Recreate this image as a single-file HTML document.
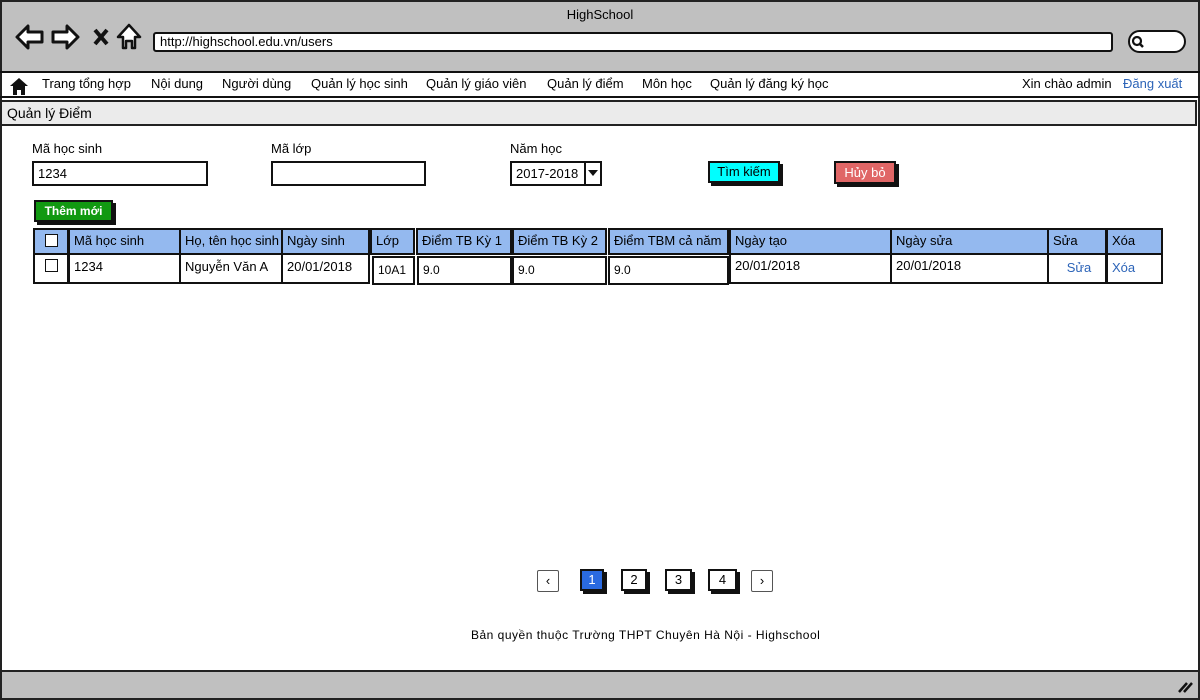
<!DOCTYPE html>
<html><head><meta charset="utf-8"><style>
*{margin:0;padding:0;box-sizing:border-box}
body{width:1200px;height:700px;position:relative;background:#fff;font-family:"Liberation Sans","DejaVu Sans",sans-serif;font-size:13px;color:#000;overflow:hidden}
.a{position:absolute}
.box{position:absolute;border:2px solid #111;background:#fff}
.t{position:absolute;white-space:nowrap}
.cell{position:absolute;border:2px solid #111;padding-left:4px;line-height:22px;white-space:nowrap;font-size:13px}
.h{background:#94b9ef}
.btn{position:absolute;border:2px solid #111;box-shadow:3px 3px 0 #111;text-align:center;font-size:13px}
</style></head><body>
<div class="a" style="left:0;top:0;width:1200px;height:700px;border:2px solid #222"></div>
<div class="a" style="left:2px;top:2px;width:1196px;height:70px;background:#c0c0c0"></div>
<div class="t" style="left:0;width:1200px;text-align:center;top:7px;font-size:13px">HighSchool</div>
<svg class="a" style="left:14px;top:22px" width="135" height="30" viewBox="0 0 135 30">
<path d="M3 15 L14 4 L14 10 L28 10 L28 20 L14 20 L14 26 Z" fill="#fff" stroke="#111" stroke-width="3" stroke-linejoin="round"/>
<path d="M64 15 L53 4 L53 10 L39 10 L39 20 L53 20 L53 26 Z" fill="#fff" stroke="#111" stroke-width="3" stroke-linejoin="round"/>
<path d="M81 8 L93 22 M93 8 L81 22" stroke="#111" stroke-width="4"/>
<path d="M104 15 L115 3 L126 15 L121 15 L121 26 L118 26 L118 19 L112 19 L112 26 L109 26 L109 15 Z" fill="#fff" stroke="#111" stroke-width="2.5" stroke-linejoin="round"/>
</svg>
<div class="box" style="left:153px;top:32px;width:960px;height:20px;border-radius:3px"></div>
<div class="t" style="left:160px;top:34px;font-size:13px">http://highschool.edu.vn/users</div>
<div class="box" style="left:1128px;top:30px;width:58px;height:23px;border-radius:12px"></div>
<svg class="a" style="left:1131px;top:35px" width="14" height="14"><circle cx="6" cy="6" r="4" fill="none" stroke="#111" stroke-width="2.2"/><path d="M9 9 L12 12" stroke="#111" stroke-width="2.5"/></svg>
<div class="a" style="left:0;top:71px;width:1200px;height:2px;background:#111"></div>
<div class="a" style="left:0;top:96px;width:1200px;height:2px;background:#111"></div>
<svg class="a" style="left:9px;top:76px" width="20" height="20"><path d="M1 10 L10 2 L19 10 L16 10 L16 19 L12 19 L12 14 L8 14 L8 19 L4 19 L4 10 Z" fill="#111"/></svg>
<div class="t" style="left:42px;top:76px">Trang tổng hợp</div>
<div class="t" style="left:151px;top:76px">Nội dung</div>
<div class="t" style="left:222px;top:76px">Người dùng</div>
<div class="t" style="left:311px;top:76px">Quản lý học sinh</div>
<div class="t" style="left:426px;top:76px">Quản lý giáo viên</div>
<div class="t" style="left:547px;top:76px">Quản lý điểm</div>
<div class="t" style="left:642px;top:76px">Môn học</div>
<div class="t" style="left:710px;top:76px">Quản lý đăng ký học</div>
<div class="t" style="left:1022px;top:76px">Xin chào admin</div>
<div class="t" style="left:1123px;top:76px;color:#2c64b8">Đăng xuất</div>
<div class="a" style="left:0;top:100px;width:1197px;height:26px;background:#ebebeb;border:2px solid #222"></div>
<div class="t" style="left:7px;top:105px;font-size:14px">Quản lý Điểm</div>

<div class="t" style="left:32px;top:141px">Mã học sinh</div>
<div class="t" style="left:271px;top:141px">Mã lớp</div>
<div class="t" style="left:510px;top:141px">Năm học</div>
<div class="box" style="left:32px;top:161px;width:176px;height:25px;padding:3px 4px">1234</div>
<div class="box" style="left:271px;top:161px;width:155px;height:25px"></div>
<div class="box" style="left:510px;top:161px;width:92px;height:25px;padding:3px 4px">2017-2018</div>
<div class="a" style="left:584px;top:161px;width:2px;height:25px;background:#111"></div>
<svg class="a" style="left:588px;top:170px" width="10" height="8"><path d="M0 0 L10 0 L5 6 Z" fill="#111"/></svg>
<div class="btn" style="left:708px;top:161px;width:72px;height:22px;background:#00ffff;line-height:18px">Tìm kiếm</div>
<div class="btn" style="left:834px;top:161px;width:62px;height:23px;background:#e06666;color:#fff;line-height:19px">Hủy bỏ</div>
<div class="btn" style="left:34px;top:200px;width:79px;height:22px;background:#119911;color:#fff;line-height:18px;font-weight:bold;font-size:12px">Thêm mới</div>

<div class="cell h" style="left:33px;top:228px;width:36px;height:27px"></div>
<div class="a" style="left:45px;top:234px;width:13px;height:13px;border:1.5px solid #111;background:#fff"></div>
<div class="cell h" style="left:68px;top:228px;width:113px;height:27px">Mã học sinh</div>
<div class="cell h" style="left:179px;top:228px;width:104px;height:27px">Họ, tên học sinh</div>
<div class="cell h" style="left:281px;top:228px;width:89px;height:27px">Ngày sinh</div>
<div class="cell h" style="left:370px;top:228px;width:45px;height:27px">Lớp</div>
<div class="cell h" style="left:416px;top:228px;width:96px;height:27px">Điểm TB Kỳ 1</div>
<div class="cell h" style="left:512px;top:228px;width:95px;height:27px">Điểm TB Kỳ 2</div>
<div class="cell h" style="left:608px;top:228px;width:121px;height:27px">Điểm TBM cả năm</div>
<div class="cell h" style="left:729px;top:228px;width:163px;height:27px">Ngày tạo</div>
<div class="cell h" style="left:890px;top:228px;width:159px;height:27px">Ngày sửa</div>
<div class="cell h" style="left:1047px;top:228px;width:60px;height:27px">Sửa</div>
<div class="cell h" style="left:1106px;top:228px;width:57px;height:27px">Xóa</div>

<div class="cell" style="left:33px;top:253px;width:36px;height:31px"></div>
<div class="a" style="left:45px;top:259px;width:13px;height:13px;border:1.5px solid #111"></div>
<div class="cell" style="left:68px;top:253px;width:113px;height:31px;line-height:24px">1234</div>
<div class="cell" style="left:179px;top:253px;width:104px;height:31px;line-height:24px">Nguyễn Văn A</div>
<div class="cell" style="left:281px;top:253px;width:89px;height:31px;line-height:24px">20/01/2018</div>
<div class="cell" style="left:372px;top:256px;width:43px;height:29px;line-height:25px;font-size:12px">10A1</div>
<div class="cell" style="left:417px;top:256px;width:95px;height:29px;line-height:25px;font-size:12px">9.0</div>
<div class="cell" style="left:512px;top:256px;width:95px;height:29px;line-height:25px;font-size:12px">9.0</div>
<div class="cell" style="left:608px;top:256px;width:121px;height:29px;line-height:25px;font-size:12px">9.0</div>
<div class="cell" style="left:729px;top:253px;width:163px;height:31px">20/01/2018</div>
<div class="cell" style="left:890px;top:253px;width:159px;height:31px">20/01/2018</div>
<div class="cell" style="left:1047px;top:253px;width:60px;height:31px;color:#2c64b8;text-align:center;line-height:26px">Sửa</div>
<div class="cell" style="left:1106px;top:253px;width:57px;height:31px;color:#2c64b8;line-height:26px">Xóa</div>

<div class="a" style="left:537px;top:570px;width:22px;height:22px;border:1.5px solid #555;border-radius:2px;text-align:center;line-height:19px">‹</div>
<div class="btn" style="left:580px;top:569px;width:24px;height:22px;background:#2a6ae0;color:#fff;line-height:18px">1</div>
<div class="btn" style="left:621px;top:569px;width:26px;height:22px;background:#fff;line-height:18px">2</div>
<div class="btn" style="left:665px;top:569px;width:27px;height:22px;background:#fff;line-height:18px">3</div>
<div class="btn" style="left:708px;top:569px;width:29px;height:22px;background:#fff;line-height:18px">4</div>
<div class="a" style="left:751px;top:570px;width:22px;height:22px;border:1.5px solid #555;border-radius:2px;text-align:center;line-height:19px">›</div>
<div class="t" style="left:471px;top:628px;font-size:12px;letter-spacing:0.5px">Bản quyền thuộc Trường THPT Chuyên Hà Nội - Highschool</div>

<div class="a" style="left:0;top:670px;width:1200px;height:30px;background:#c0c0c0;border:2px solid #222"></div>
<svg class="a" style="left:1177px;top:680px" width="16" height="14"><path d="M2 12 L10 3 M7 12 L15 3" stroke="#111" stroke-width="2.5"/></svg>
</body></html>
